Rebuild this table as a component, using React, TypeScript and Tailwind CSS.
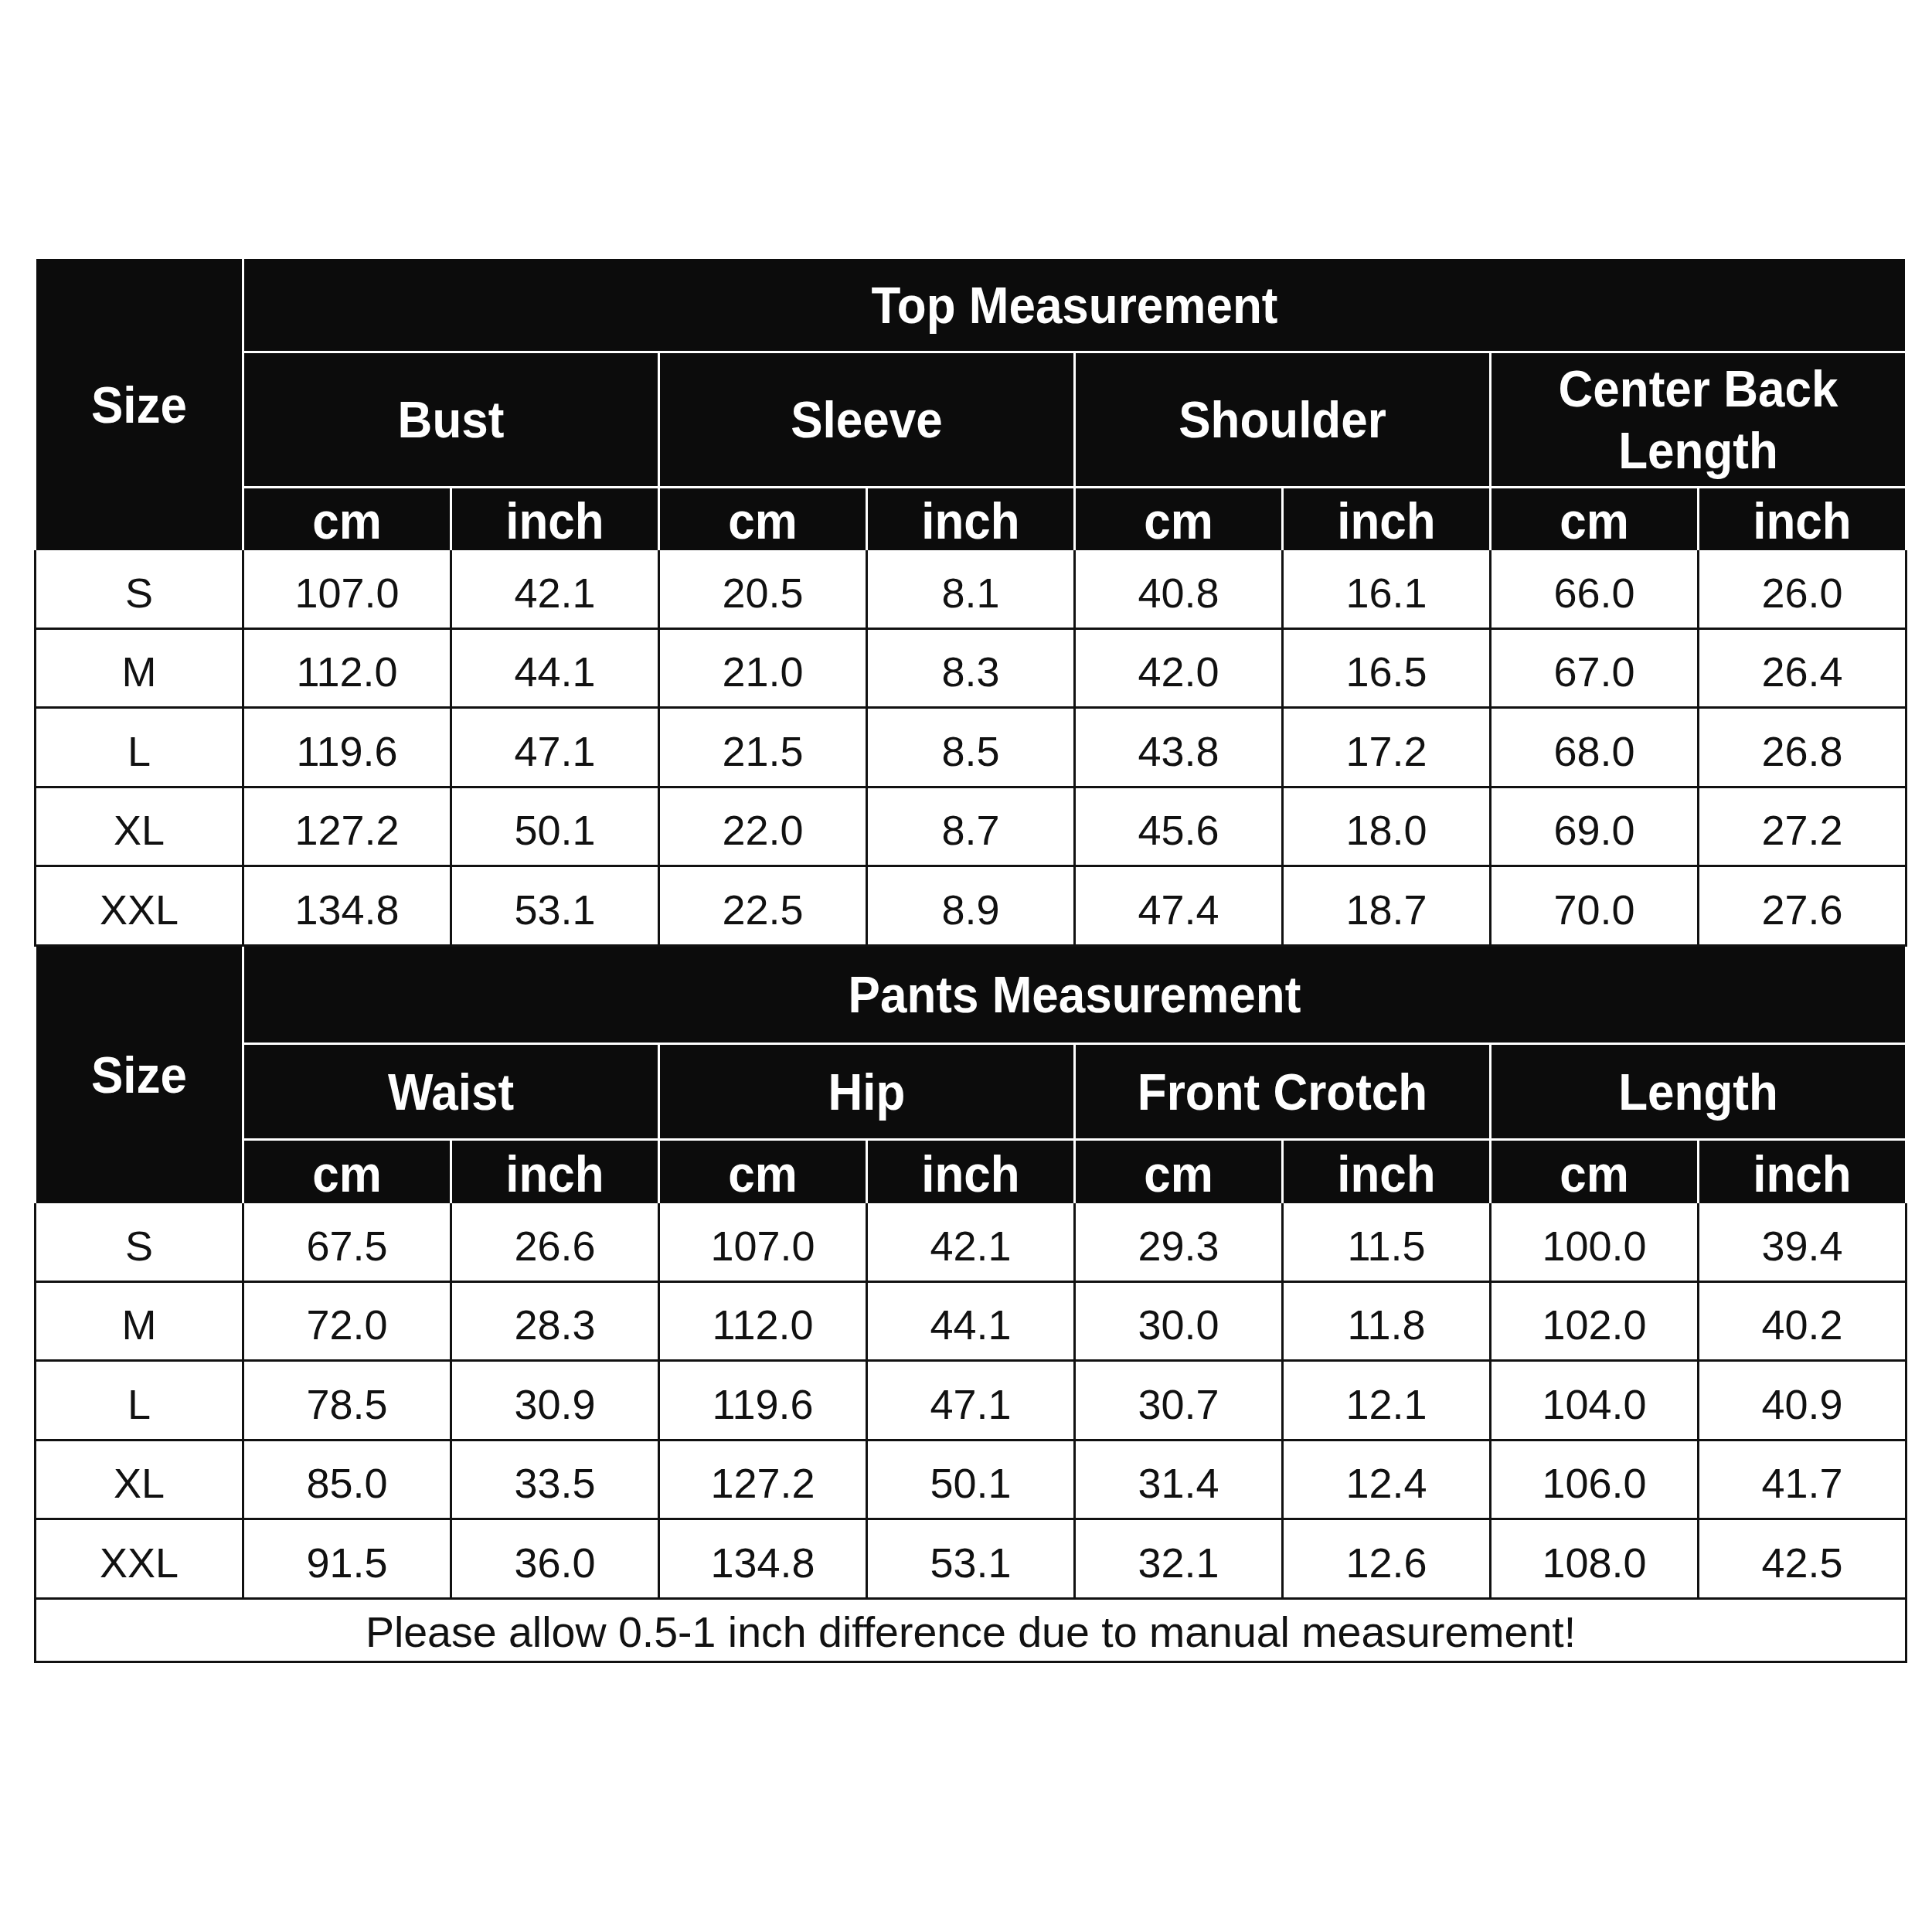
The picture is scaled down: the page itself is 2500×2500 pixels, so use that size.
import React from "react";

type Section = {
  title: string;
  groups: React.ReactNode[];
  rows: string[][];
  headRows: string;
};

const top: Section = {
  title: "Top Measurement",
  groups: [
    "Bust",
    "Sleeve",
    "Shoulder",
    <>
      Center Back
      <br />
      Length
    </>,
  ],
  headRows: "grid-rows-[119px_172px_80px]",
  rows: [
    ["S", "107.0", "42.1", "20.5", "8.1", "40.8", "16.1", "66.0", "26.0"],
    ["M", "112.0", "44.1", "21.0", "8.3", "42.0", "16.5", "67.0", "26.4"],
    ["L", "119.6", "47.1", "21.5", "8.5", "43.8", "17.2", "68.0", "26.8"],
    ["XL", "127.2", "50.1", "22.0", "8.7", "45.6", "18.0", "69.0", "27.2"],
    ["XXL", "134.8", "53.1", "22.5", "8.9", "47.4", "18.7", "70.0", "27.6"],
  ],
};

const pants: Section = {
  title: "Pants Measurement",
  groups: ["Waist", "Hip", "Front Crotch", "Length"],
  headRows: "grid-rows-[124.5px_121px_81px]",
  rows: [
    ["S", "67.5", "26.6", "107.0", "42.1", "29.3", "11.5", "100.0", "39.4"],
    ["M", "72.0", "28.3", "112.0", "44.1", "30.0", "11.8", "102.0", "40.2"],
    ["L", "78.5", "30.9", "119.6", "47.1", "30.7", "12.1", "104.0", "40.9"],
    ["XL", "85.0", "33.5", "127.2", "50.1", "31.4", "12.4", "106.0", "41.7"],
    ["XXL", "91.5", "36.0", "134.8", "53.1", "32.1", "12.6", "108.0", "42.5"],
  ],
};

function H({ children }: { children: React.ReactNode }) {
  return (
    <span className="inline-block scale-y-[1.08] text-center text-[62px] font-bold leading-[74px] text-white">
      {children}
    </span>
  );
}

function Block({ s, footer }: { s: Section; footer?: boolean }) {
  return (
    <div>
      <div className={`grid grid-cols-9 ${s.headRows} gap-[3px] bg-white px-[3px]`}>
        <div className="row-span-3 flex items-center justify-center bg-[#0c0c0c]">
          <H>Size</H>
        </div>
        <div className="col-span-8 flex items-center justify-center bg-[#0c0c0c]">
          <H>{s.title}</H>
        </div>
        {s.groups.map((g, i) => (
          <div key={i} className="col-span-2 flex items-center justify-center bg-[#0c0c0c]">
            <H>{g}</H>
          </div>
        ))}
        {[0, 1, 2, 3].map((i) => (
          <React.Fragment key={i}>
            <div className="flex items-center justify-center bg-[#0c0c0c] pt-[4px]">
              <H>cm</H>
            </div>
            <div className="flex items-center justify-center bg-[#0c0c0c] pt-[4px]">
              <H>inch</H>
            </div>
          </React.Fragment>
        ))}
      </div>
      <div className="grid grid-cols-9 gap-[3px] bg-[#111111] px-[3px] pb-[3px]">
        {s.rows.map((r, ri) =>
          r.map((c, ci) => (
            <div
              key={`${ri}-${ci}`}
              className="flex h-[99.5px] items-center justify-center bg-white pt-[10px] text-[54px] leading-none text-[#111111]"
            >
              {c}
            </div>
          ))
        )}
        {footer && (
          <div className="col-span-9 flex h-[79.5px] items-center justify-center bg-white pt-[6px] text-[55.5px] leading-none text-[#111111]">
            Please allow 0.5-1 inch difference due to manual measurement!
          </div>
        )}
      </div>
    </div>
  );
}

export default function App() {
  return (
    <div className="h-[2500px] w-[2500px] bg-white font-['Liberation_Sans',Arial,sans-serif]">
      <div className="ml-[44px] w-[2424px] pt-[335px]">
        <Block s={top} />
        <Block s={pants} footer />
      </div>
    </div>
  );
}
